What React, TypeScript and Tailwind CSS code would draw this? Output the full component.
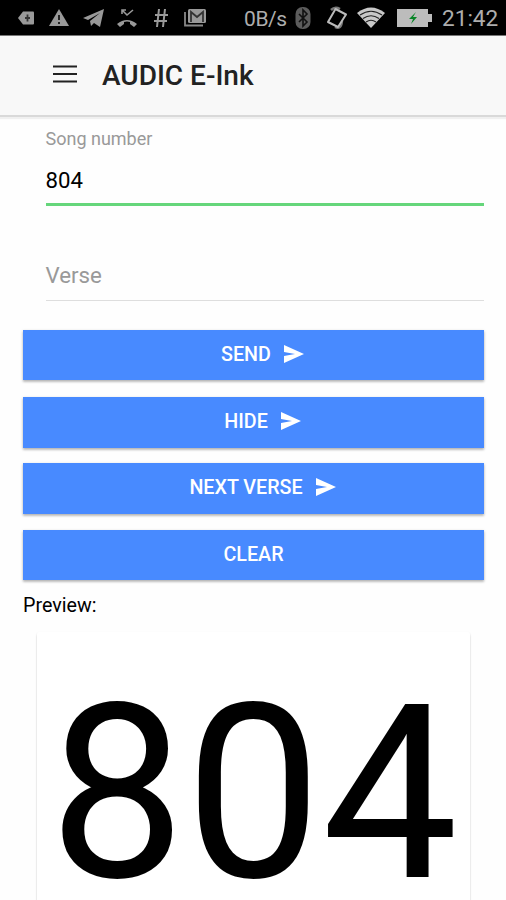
import React from "react";

function Send() {
  return (
    <svg viewBox="0 0 20 20" className="mb-[2px] h-5 w-5 shrink-0" fill="#fff">
      <path d="M0 1 L20 10 L0 19 V12 L11 10 L0 8 Z" />
    </svg>
  );
}

function ActionButton({ label, send, className }: { label: string; send?: boolean; className: string }) {
  return (
    <button
      className={
        "flex w-full shrink-0 items-center justify-center gap-[13px] bg-[#488aff] text-[19.7px] leading-[24px] font-medium text-white shadow-[0_2px_2px_rgba(0,0,0,0.16),0_1px_3px_rgba(0,0,0,0.2)] " +
        className
      }
    >
      <span>{label}</span>
      {send && <Send />}
    </button>
  );
}

function StatusBar() {
  return (
    <div className="flex h-[35px] shrink-0 items-center bg-black text-[#adadad]">
      <svg viewBox="0 0 16 16" className="ml-[18px] h-4 w-4" fill="#999">
        <path d="M5 1.5H15Q16 1.5 16 2.5V13.5Q16 14.5 15 14.5H5L0 8Z" />
        <path d="M9.5 4.500v7M7 8h5" stroke="#333" strokeWidth="1.8" />
      </svg>
      <svg viewBox="0 0 20 18" className="ml-[15px] h-[18px] w-5" fill="#999">
        <path d="M10 0L20 17H0Z" />
        <path d="M10 6v5M10 13v2" stroke="#222" strokeWidth="2" />
      </svg>
      <svg viewBox="0 0 21 18" className="ml-[14px] h-[18px] w-[21px]" fill="#999">
        <path d="M0 9L21 0L17 18L11 14L8 17L7 12L17 4L5 11Z" />
      </svg>
      <svg viewBox="0 0 20 18" className="ml-[13px] h-[18px] w-5" fill="#999">
        <path d="M0 15Q10 7 20 15L17 18L13 15V13Q10 12 7 13V15L3 18Z" />
        <path d="M5 5V1h4M5 1l5 5 6-5" fill="none" stroke="#999" strokeWidth="1.6" />
      </svg>
      <svg viewBox="0 0 14 18" className="ml-[17px] h-[18px] w-[14px]" fill="none" stroke="#999" strokeWidth="2">
        <path d="M5 0L3 18M11 0L9 18M1 6h13M0 12h13" />
      </svg>
      <svg viewBox="0 0 23 19" className="ml-[16px] h-[19px] w-[23px]">
        <path d="M1 4V17.5H19" fill="none" stroke="#888" strokeWidth="1.8" />
        <rect x="4" y="1" width="18" height="14" rx="1.5" fill="#999" />
        <path d="M7 14V4L13 9L19 4V14" fill="none" stroke="#333" strokeWidth="1.8" />
      </svg>
      <span className="ml-[37px] w-[43px] pt-[3px] text-[21px] leading-[26px] tracking-[-0.4px] whitespace-nowrap">0B/s</span>
      <svg viewBox="0 0 16 24" className="ml-[8px] h-6 w-4">
        <rect x="0.5" y="1" width="15" height="22" rx="7" fill="#5c5c5c" />
        <path d="M4 8L12 16L8 20V4L12 8L4 16" fill="none" stroke="#111" strokeWidth="1.6" />
      </svg>
      <svg viewBox="0 0 22 24" className="ml-[15px] h-6 w-[22px]" fill="none">
        <path d="M5 4Q9 0 14 3M9 21Q15 24 16 15" stroke="#777" strokeWidth="2.5" />
        <path d="M9.500 3L20 8.500L12 21L2 16Z" fill="#000" stroke="#bbb" strokeWidth="2" strokeLinejoin="round" />
      </svg>
      <svg viewBox="0 0 28 21" className="ml-[9px] h-[21px] w-7">
        <path d="M0 6Q14 -5 28 6L14 21Z" fill="#c8c8c8" />
        <path d="M3 8Q14 .5 25 8M6 11.500Q14 6 22 11.500M9 15Q14 11.5 19 15" fill="none" stroke="#222" strokeWidth="1.1" />
      </svg>
      <svg viewBox="0 0 36 20" className="ml-[12px] h-5 w-9">
        <path d="M0 1H31V6H35V14H31V19H0Z" fill="#bcbcbc" />
        <path d="M19 4L12 11H16L14 16L20 9H16Z" fill="#078526" />
      </svg>
      <span className="ml-[9px] pt-[3px] text-[22.6px] leading-[26px] whitespace-nowrap">21:42</span>
    </div>
  );
}

export default function App() {
  return (
    <div className="flex h-[900px] w-[506px] flex-col overflow-hidden bg-[#fefefe] font-[Roboto,sans-serif] text-black">
      <StatusBar />
      <header className="flex h-[80px] shrink-0 items-center border-t border-[#777] bg-[#f8f8f8] pl-[53px] text-[#222] shadow-[0_2px_0_#d9d9d9,0_4px_1px_#f0f0f0]">
        <svg viewBox="0 0 24 18" className="mb-[4px] h-[18px] w-6" stroke="#222" strokeWidth="2.2">
          <path d="M0 1.500h24M0 9h24M0 16.5h24" />
        </svg>
        <h1 className="ml-[25px] text-[28px] leading-[34px] font-medium">AUDIC E-Ink</h1>
      </header>
      <main className="flex min-h-0 flex-1 flex-col pr-[22px] pl-[23px]">
        <div className="ml-[22.5px] flex h-[91px] shrink-0 flex-col border-b-[3px] border-[#65d67b] pt-[13px]">
          <label className="text-[18px] leading-[22px] text-[#999]">Song number</label>
          <span className="mt-[16px] text-[22.2px] leading-[28px]">804</span>
        </div>
        <div className="ml-[22.5px] flex h-[95px] shrink-0 flex-col justify-end border-b border-[#dedede] pb-[11px]">
          <span className="text-[22.3px] leading-[28px] text-[#999]">Verse</span>
        </div>
        <ActionButton label="SEND" send className="mt-[29px] h-[50px] pl-[18px]" />
        <ActionButton label="HIDE" send className="mt-[17px] h-[51px] pb-[2px] pl-[18px]" />
        <ActionButton label="NEXT VERSE" send className="mt-[15px] h-[51px] pb-[2px] pl-[18px]" />
        <ActionButton label="CLEAR" className="mt-[16px] h-[50px] pb-[1px]" />
        <p className="mt-[14px] text-[19.7px] leading-[24px]">Preview:</p>
        <section className="mt-[14px] mr-[14px] ml-[14px] flex h-[320px] shrink-0 justify-center rounded-[2px] bg-white pt-[62px] shadow-[0_3px_2px_rgba(0,0,0,0.14),0_1px_2px_rgba(0,0,0,0.14)]">
          <span className="text-[242.5px] leading-[200px] whitespace-nowrap">804</span>
        </section>
      </main>
    </div>
  );
}
